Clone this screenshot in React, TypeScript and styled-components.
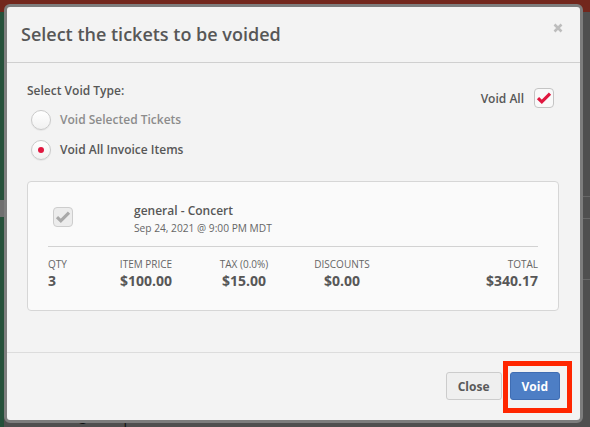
import { FC } from 'react';
import styled, { createGlobalStyle } from 'styled-components';

const GlobalStyle = createGlobalStyle`
  html, body {
    margin: 0;
    padding: 0;
  }

  body {
    background: #4e4e4e;
    font-family: 'Open Sans', 'Liberation Sans', sans-serif;
  }
`;

interface Stat {
  label: string;
  value: string;
  align: 'left' | 'center' | 'right';
}

const stats: Stat[] = [
  { label: 'QTY', value: '3', align: 'left' },
  { label: 'ITEM PRICE', value: '$100.00', align: 'center' },
  { label: 'TAX (0.0%)', value: '$15.00', align: 'center' },
  { label: 'DISCOUNTS', value: '$0.00', align: 'center' },
  { label: 'TOTAL', value: '$340.17', align: 'right' },
];

const CheckMark: FC<{ color: string }> = ({ color }) => (
  <svg width="20" height="20" viewBox="0 0 20 20">
    <path d="M4 10.2 L7.8 13.8 L16 5.6" fill="none" stroke={color} strokeWidth="3.2" />
  </svg>
);

const CloseIcon = () => (
  <svg width="10" height="10" viewBox="0 0 10 10">
    <path d="M1.5 1.5 L8.5 8.5 M8.5 1.5 L1.5 8.5" stroke="#bdbdbd" strokeWidth="2.6" />
  </svg>
);

export default function App() {
  return (
    <>
      <GlobalStyle />
      <Page>
        <TopBar />
        <PageBody>
          <SideNav>
            <SideNavMark />
          </SideNav>
          <Content>
            <ContentRow $height={21} />
            <ContentRow $height={60} />
            <Email>amanda@showpass.com</Email>
          </Content>
        </PageBody>

        <Modal>
          <Header>
            <Title>Select the tickets to be voided</Title>
            <CloseButton>
              <CloseIcon />
            </CloseButton>
          </Header>

          <Body>
            <TypeRow>
              <div>
                <FieldLabel>Select Void Type:</FieldLabel>
                <Radio $muted>
                  <RadioCircle />
                  Void Selected Tickets
                </Radio>
                <Radio>
                  <RadioCircle $checked />
                  Void All Invoice Items
                </Radio>
              </div>
              <VoidAll>
                Void All
                <CheckBox>
                  <CheckMark color="#e0173f" />
                </CheckBox>
              </VoidAll>
            </TypeRow>

            <Card>
              <TicketRow>
                <TicketCheckCell>
                  <CheckBox $disabled>
                    <CheckMark color="#a9a9a9" />
                  </CheckBox>
                </TicketCheckCell>
                <div>
                  <TicketName>general - Concert</TicketName>
                  <TicketDate>Sep 24, 2021 @ 9:00 PM MDT</TicketDate>
                </div>
              </TicketRow>
              <Stats>
                {stats.map((stat) => (
                  <StatCell key={stat.label} $align={stat.align}>
                    <StatLabel>{stat.label}</StatLabel>
                    <StatValue>{stat.value}</StatValue>
                  </StatCell>
                ))}
              </Stats>
            </Card>
          </Body>

          <Footer>
            <Button>Close</Button>
            <Highlight>
              <Button $primary>Void</Button>
            </Highlight>
          </Footer>
        </Modal>
      </Page>
    </>
  );
}

const Page = styled.div`
  position: relative;
  width: 590px;
  height: 427px;
  overflow: hidden;
  display: flex;
  flex-direction: column;
`;

const TopBar = styled.div`
  height: 27px;
  background: #72271d;
`;

const PageBody = styled.div`
  flex: 1;
  display: flex;
`;

const SideNav = styled.div`
  width: 4px;
  background: #25503a;
  padding-top: 188px;
`;

const SideNavMark = styled.div`
  height: 17px;
  background: #6f6f6f;
`;

const Content = styled.div`
  flex: 1;
  display: flex;
  flex-direction: column;
  padding-top: 184px;
  background: #4f4f4f;
`;

const ContentRow = styled.div<{ $height: number }>`
  height: ${({ $height }) => $height}px;
  border-top: 1px solid #676767;
  &:nth-of-type(2) {
    border-bottom: 1px solid #676767;
  }
`;

const Email = styled.div`
  margin-top: 128px;
  padding-left: 19px;
  font-size: 14px;
  color: #111;
`;

const Modal = styled.div`
  position: absolute;
  top: 4px;
  left: 4px;
  width: 579px;
  box-sizing: border-box;
  background: #f3f3f3;
  border: 3px solid #7d7d7d;
  border-radius: 6px;
  color: #575757;
`;

const Header = styled.div`
  display: flex;
  justify-content: space-between;
  align-items: flex-start;
  padding: 15px 17px 15px 14px;
  border-bottom: 1px solid #cfcfcf;
`;

const Title = styled.h4`
  margin: 0;
  font-size: 18px;
  line-height: 25px;
  font-weight: 600;
  color: #575757;
`;

const CloseButton = styled.span`
  display: flex;
  margin-top: 1px;
`;

const Body = styled.div`
  padding: 19px 21px 41px 20px;
`;

const TypeRow = styled.div`
  display: flex;
  justify-content: space-between;
  align-items: flex-start;
  padding: 0 5px 0 0;
`;

const FieldLabel = styled.div`
  font-size: 12px;
  line-height: 18px;
  font-weight: 600;
`;

const Radio = styled.label<{ $muted?: boolean }>`
  display: flex;
  align-items: center;
  gap: 9px;
  margin: 10px 0 0 4px;
  font-size: 12px;
  line-height: 20px;
  font-weight: 600;
  color: ${({ $muted }) => ($muted ? '#8c8c8c' : '#575757')};
`;

const RadioCircle = styled.span<{ $checked?: boolean }>`
  position: relative;
  width: 20px;
  height: 20px;
  box-sizing: border-box;
  border-radius: 50%;
  border: 1px solid #cacaca;
  background: linear-gradient(#ffffff, #f1f1f1);
  box-shadow: 0 1px 1px rgba(0, 0, 0, 0.06);

  &::after {
    content: '';
    display: ${({ $checked }) => ($checked ? 'block' : 'none')};
    position: absolute;
    left: 6px;
    top: 6px;
    width: 6px;
    height: 6px;
    border-radius: 50%;
    background: #e0173f;
  }
`;

const VoidAll = styled.label`
  display: flex;
  align-items: center;
  gap: 10px;
  margin-top: 6px;
  font-size: 12px;
  font-weight: 600;
`;

const CheckBox = styled.span<{ $disabled?: boolean }>`
  display: flex;
  width: 20px;
  height: 20px;
  box-sizing: border-box;
  border-radius: 4px;
  border: 1px solid ${({ $disabled }) => ($disabled ? '#cdcdcd' : '#c4c4c4')};
  background: ${({ $disabled }) => ($disabled ? '#ececec' : '#f9f9f9')};
  align-items: center;
  justify-content: center;

  svg {
    margin: -1px;
  }
`;

const Card = styled.div`
  margin-top: 21px;
  padding: 20px;
  background: #fafafa;
  border: 1px solid #d6d6d6;
  border-radius: 4px;
`;

const TicketRow = styled.div`
  display: flex;
  padding-bottom: 10px;
  margin-bottom: 10px;
  border-bottom: 1px solid #d2d2d2;
`;

const TicketCheckCell = styled.div`
  width: 86px;
  padding: 5px 0 0 5px;
  box-sizing: border-box;
`;

const TicketName = styled.div`
  font-size: 12px;
  line-height: 18px;
  font-weight: 600;
`;

const TicketDate = styled.div`
  font-size: 10.2px;
  line-height: 16px;
  color: #666;
`;

const Stats = styled.div`
  display: grid;
  grid-template-columns: 1fr 2fr 2fr 2fr 3fr;
`;

const StatCell = styled.div<{ $align: string }>`
  text-align: ${({ $align }) => $align};
`;

const StatLabel = styled.div`
  font-size: 10px;
  line-height: 15px;
  color: #666;
`;

const StatValue = styled.div`
  font-size: 14px;
  line-height: 18px;
  font-weight: 700;
`;

const Footer = styled.div`
  display: flex;
  justify-content: flex-end;
  gap: 8px;
  padding: 19px 20px 20px;
  border-top: 1px solid #dcdcdc;
`;

const Button = styled.button<{ $primary?: boolean }>`
  height: 28px;
  padding: 0 11px;
  border-radius: 3px;
  font-family: inherit;
  font-size: 12px;
  font-weight: 700;
  border: 1px solid ${({ $primary }) => ($primary ? '#3f6db3' : '#cccccc')};
  background: ${({ $primary }) => ($primary ? '#4d7ec5' : '#efefef')};
  color: ${({ $primary }) => ($primary ? '#ffffff' : '#5a5a5a')};
`;

const Highlight = styled.div`
  position: relative;
  display: flex;

  &::after {
    content: '';
    position: absolute;
    left: -7px;
    right: -12px;
    top: -11px;
    bottom: -13px;
    border: 5px solid #ff2600;
  }
`;
